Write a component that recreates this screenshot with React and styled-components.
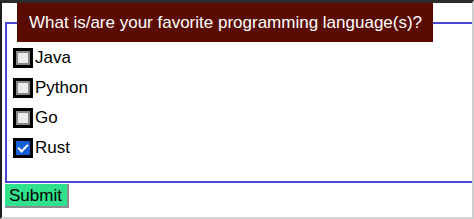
import React, { useState } from "react";
import styled, { createGlobalStyle } from "styled-components";

const languages = ["Java", "Python", "Go", "Rust"];

export default function App() {
  const [picked, setPicked] = useState({ Rust: true });

  const toggle = (name) =>
    setPicked((prev) => ({ ...prev, [name]: !prev[name] }));

  return (
    <>
      <GlobalStyle />
      <Frame>
        <Form onSubmit={(e) => e.preventDefault()}>
          <Fieldset>
            <Legend>What is/are your favorite programming language(s)?</Legend>
            {languages.map((lang) => (
              <Option key={lang}>
                <Box
                  type="checkbox"
                  checked={!!picked[lang]}
                  onChange={() => toggle(lang)}
                />
                {lang}
              </Option>
            ))}
          </Fieldset>
          <SubmitButton type="submit">Submit</SubmitButton>
        </Form>
      </Frame>
    </>
  );
}

/* ---------- estilos ---------- */

const GlobalStyle = createGlobalStyle`
  html, body {
    margin: 0;
    padding: 0;
    background: #ffffff;
  }
  body {
    font-family: "Liberation Sans", Arial, sans-serif;
  }
`;

const Frame = styled.div`
  box-sizing: border-box;
  width: 474px;
  height: 219px;
  overflow: hidden;
  border-top: 3px solid #2b2b2b;
  border-left: 2px solid #1e1e1e;
  border-right: 2px solid #cfcfcf;
  border-bottom: 2px solid #d4d4d4;
  background: #ffffff;
`;

const Form = styled.form`
  margin: 0 0 0 3px;
  display: flex;
  flex-direction: column;
  align-items: flex-start;
`;

const Fieldset = styled.fieldset`
  box-sizing: border-box;
  align-self: stretch;
  margin: 0 -40px 0 0;
  padding: 6px 0 13px 6px;
  border: 2px solid #4848d8;
  display: flex;
  flex-direction: column;
`;

const Legend = styled.legend`
  margin-left: 4px;
  padding: 10px 11px 10px 12px;
  background: #5a0c02;
  color: #ffffff;
  font-size: 17px;
  line-height: 19px;
`;

const Option = styled.label`
  display: flex;
  align-items: center;
  gap: 2px;
  height: 20px;
  margin-bottom: 10px;
  font-size: 17px;
  color: #000000;
  cursor: pointer;
`;

const Box = styled.input`
  appearance: none;
  box-sizing: border-box;
  width: 20px;
  height: 20px;
  margin: 0;
  border: 3px solid #000000;
  box-shadow: inset 0 0 0 2px #8a8a8a;
  background: #ececec;
  cursor: pointer;
  position: relative;

  &:checked {
    background: #1560d8;
    box-shadow: none;
  }

  &:checked::after {
    content: "";
    position: absolute;
    left: 4px;
    top: 1px;
    width: 4px;
    height: 8px;
    border: solid #ffffff;
    border-width: 0 2px 2px 0;
    transform: rotate(45deg);
  }
`;

const SubmitButton = styled.button`
  margin-top: 1px;
  padding: 2px 5px 1px 4px;
  background: #2fe08c;
  color: #000000;
  font-family: "Liberation Sans", Arial, sans-serif;
  font-size: 17px;
  line-height: 19px;
  border: none;
  border-right: 2px solid #8c8c8c;
  border-bottom: 2px solid #8c8c8c;
  cursor: pointer;
`;
